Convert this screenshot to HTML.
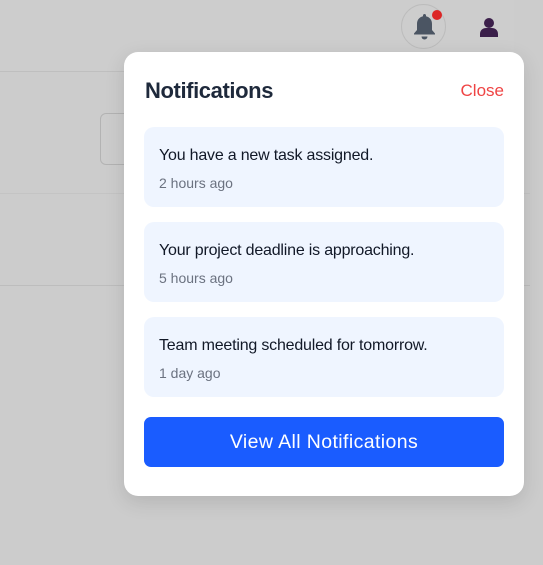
<!DOCTYPE html>
<html><head><style>
html,body{margin:0;padding:0}
body{width:543px;height:565px;background:#cccccc;position:relative;overflow:hidden;font-family:"Liberation Sans",sans-serif}
.hdr{position:absolute;left:0;top:0;width:514px;height:71px;background:#cdcdcd;border-bottom:1px solid #bfbfbf}
.sec{position:absolute;left:0;top:193px;width:530px;height:91px;border-top:1px solid #c4c4c4;border-bottom:1px solid #bdbdbd}
.btn{position:absolute;left:100px;top:113px;width:40px;height:50px;border:1px solid #b3b3b3;border-radius:6px}
.bell{position:absolute;left:401px;top:4px;width:45px;height:45px;border:1px solid #bcbcbc;border-radius:50%;box-sizing:border-box}
.dot{position:absolute;left:432px;top:10px;width:10px;height:10px;background:#dc2626;border-radius:50%}
.panel{position:absolute;left:124px;top:52px;width:400px;height:444px;background:#fff;border-radius:14px;box-shadow:0 6px 20px rgba(0,0,0,.12)}
h2{position:absolute;left:21px;top:26px;margin:0;font-size:22px;font-weight:bold;color:#1e293b;letter-spacing:-0.4px}
.close{position:absolute;right:20px;top:29px;font-size:17px;color:#ef4444}
.item{position:absolute;left:20px;width:360px;height:80px;background:#eff5ff;border-radius:10px}
.item .t{position:absolute;left:15px;top:20px;font-size:16px;color:#111827;letter-spacing:-0.2px}
.item .s{position:absolute;left:15px;top:48px;font-size:14px;color:#6b7280}
.va{position:absolute;left:20px;top:365px;width:360px;height:50px;background:#1a5cff;border-radius:7px;color:#fff;font-size:19.5px;text-align:center;line-height:50px;letter-spacing:0.4px}
</style></head><body>
<div class="hdr"></div>
<div class="btn"></div>
<div class="sec"></div>
<div class="bell"></div>
<svg style="position:absolute;left:412px;top:13px" width="25" height="28" viewBox="0 0 25 28"><path d="M12.5 1c-1 0-1.5.7-1.5 1.5v.8C6.8 4.3 5 7.5 5 11v6l-3 3.5v1h21v-1L20 17v-6c0-3.5-1.8-6.7-6-7.7v-.8C14 1.7 13.5 1 12.5 1z" fill="#4b5563"/><path d="M9.5 23.5a3 3 0 0 0 6 0z" fill="#4b5563"/></svg>
<div class="dot"></div>
<svg style="position:absolute;left:480px;top:17px" width="18" height="20" viewBox="0 0 18 20"><circle cx="9" cy="6" r="5" fill="#3b1f4a"/><path d="M0 20v-3c0-4 3-6 6-6h6c3 0 6 2 6 6v3z" fill="#3b1f4a"/></svg>
<div class="panel">
<h2>Notifications</h2><div class="close">Close</div>
<div class="item" style="top:75px"><div class="t">You have a new task assigned.</div><div class="s">2 hours ago</div></div>
<div class="item" style="top:170px"><div class="t">Your project deadline is approaching.</div><div class="s">5 hours ago</div></div>
<div class="item" style="top:265px"><div class="t">Team meeting scheduled for tomorrow.</div><div class="s">1 day ago</div></div>
<div class="va">View All Notifications</div>
</div>
</body></html>
